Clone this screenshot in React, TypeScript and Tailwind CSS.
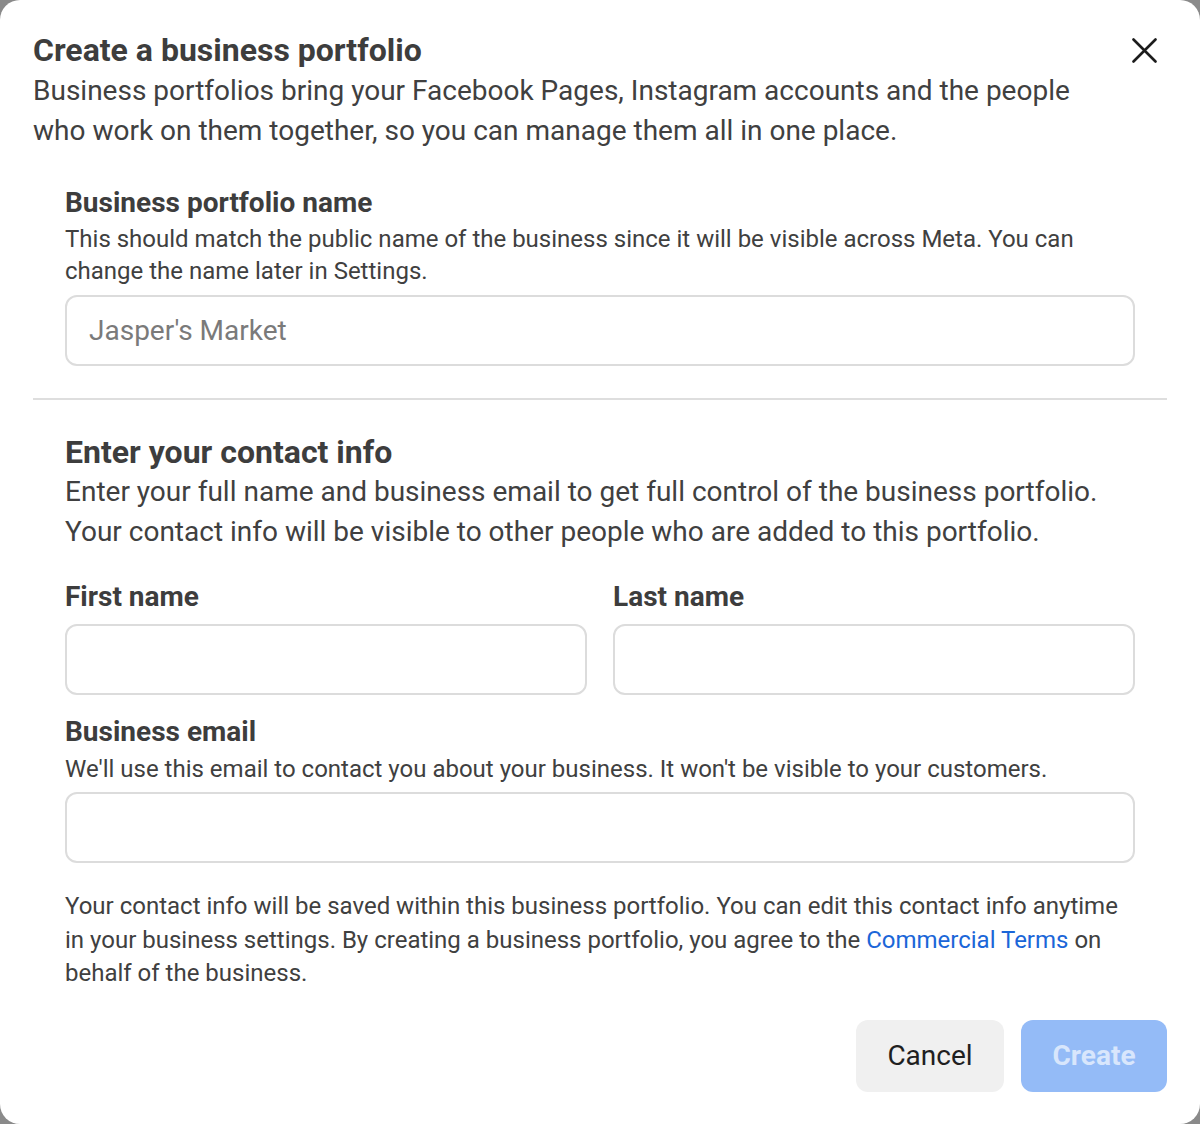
import React from 'react';

const Field: React.FC<{ placeholder?: string }> = ({ placeholder }) => (
  <input
    type="text"
    placeholder={placeholder}
    className="h-[71px] w-full rounded-[12px] border-2 border-[#dcdcdc] bg-white px-[22px] text-[28px] text-[#333] outline-none placeholder:text-[#7a7a7a]"
  />
);

export default function App() {
  return (
    <div className="min-h-[1124px] w-full bg-[#8a8a8a] font-['Roboto','Liberation_Sans',sans-serif] text-[#404040]">
      <div className="relative flex min-h-[1124px] w-full flex-col rounded-[20px] bg-white px-[33px] pt-[32px] pb-[32px]">
        <button className="absolute right-[41px] top-[35px] flex h-[30px] w-[30px] items-center justify-center text-[#1c1c1c]">
          <svg width="25" height="25" viewBox="0 0 25 25" fill="none" stroke="currentColor" strokeWidth="2.6" strokeLinecap="round">
            <path d="M1.5 1.5 L23.5 23.5 M23.5 1.5 L1.5 23.5" />
          </svg>
        </button>

        <h1 className="text-[32px] font-bold leading-[36px] text-[#3d3d3d]">Create a business portfolio</h1>
        <p className="mt-[3px] text-[28px] leading-[40px]">
          Business portfolios bring your Facebook Pages, Instagram accounts and the people
          <br />
          who work on them together, so you can manage them all in one place.
        </p>

        <div className="mt-[36px] px-[32px]">
          <h2 className="text-[28px] font-bold leading-[32px] text-[#3d3d3d]">Business portfolio name</h2>
          <p className="mt-[4px] text-[24px] leading-[32px]">
            This should match the public name of the business since it will be visible across Meta. You can
            <br />
            change the name later in Settings.
          </p>
          <div className="mt-[8px]">
            <Field placeholder="Jasper's Market" />
          </div>
        </div>

        <div className="mt-[32px] h-[2px] w-full bg-[#dedede]" />

        <div className="mt-[34px] px-[32px]">
          <h2 className="text-[32px] font-bold leading-[36px] text-[#3d3d3d]">Enter your contact info</h2>
          <p className="mt-[2px] text-[28px] leading-[40px]">
            Enter your full name and business email to get full control of the business portfolio.
            <br />
            Your contact info will be visible to other people who are added to this portfolio.
          </p>

          <div className="mt-[29px] grid grid-cols-2 gap-x-[26px]">
            <div>
              <label className="block text-[28px] font-bold leading-[32px] text-[#3d3d3d]">First name</label>
              <div className="mt-[11px]">
                <Field />
              </div>
            </div>
            <div>
              <label className="block text-[28px] font-bold leading-[32px] text-[#3d3d3d]">Last name</label>
              <div className="mt-[11px]">
                <Field />
              </div>
            </div>
          </div>

          <label className="mt-[21px] block text-[28px] font-bold leading-[32px] text-[#3d3d3d]">Business email</label>
          <p className="mt-[5px] text-[24px] leading-[32px]">
            We'll use this email to contact you about your business. It won't be visible to your customers.
          </p>
          <div className="mt-[7px]">
            <Field />
          </div>

          <p className="mt-[27px] text-[24px] leading-[33.5px]">
            Your contact info will be saved within this business portfolio. You can edit this contact info anytime
            <br />
            in your business settings. By creating a business portfolio, you agree to the{' '}
            <a href="#" className="text-[#1b66d8]">Commercial Terms</a> on
            <br />
            behalf of the business.
          </p>
        </div>

        <div className="mt-[29px] flex justify-end gap-[17px]">
          <button className="h-[72px] w-[148px] rounded-[12px] bg-[#f0f0f0] text-[28px] text-[#1f1f1f]">Cancel</button>
          <button className="h-[72px] w-[146px] rounded-[12px] bg-[#94bbf7] text-[28px] font-bold text-[#d8e6fc]">Create</button>
        </div>
      </div>
    </div>
  );
}
